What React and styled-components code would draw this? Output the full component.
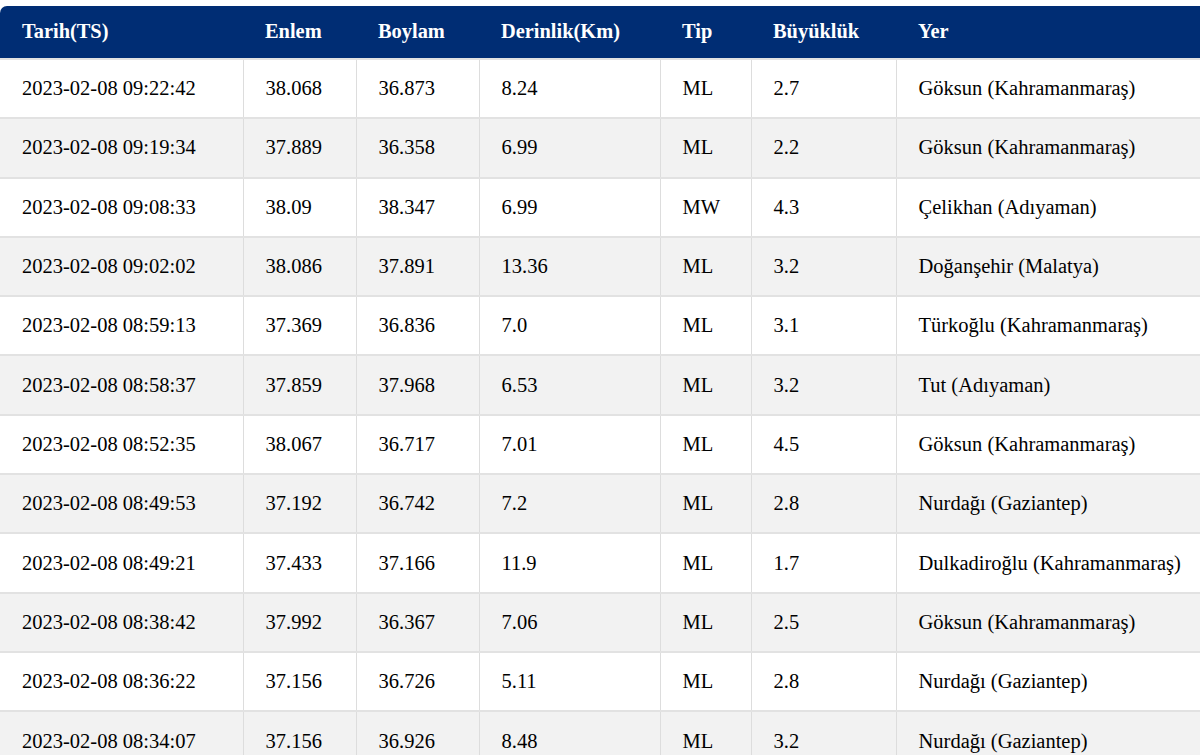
import styled, { createGlobalStyle } from "styled-components";

const GlobalStyle = createGlobalStyle`
	body {
		margin: 0;
		background: #ffffff;
		font-family: "Liberation Serif", "Times New Roman", serif;
		overflow: hidden;
	}
`;

const Wrapper = styled.div`
	padding-top: 6px;
	width: 1200px;
	overflow: hidden;
`;

const Table = styled.table`
	width: 1220px;
	border-collapse: collapse;
	color: #000;
`;

const HeadRow = styled.tr`
	background-color: #002d74;
`;

const Th = styled.th`
	height: 53px;
	padding: 0 22px 2px;
	text-align: left;
	color: #ffffff;
	font-size: 20.4px;
	font-weight: bold;
	border-bottom: 1px solid #4a5f92;
	box-sizing: border-box;
	&:first-child {
		border-top-left-radius: 7px;
	}
`;

const Row = styled.tr`
	background-color: ${(props) => (props.$alt ? "#f2f2f2" : "#ffffff")};
`;

const Td = styled.td`
	height: 59.3px;
	box-sizing: border-box;
	padding: 0 22px;
	font-size: 20.5px;
	border: 1px solid #dddddd;
	border-top: 2px solid #e2e2e2;
	&:first-child {
		border-left: none;
	}
`;

const columns = [
	{ label: "Tarih(TS)", width: 243 },
	{ label: "Enlem", width: 113 },
	{ label: "Boylam", width: 123 },
	{ label: "Derinlik(Km)", width: 181 },
	{ label: "Tip", width: 91 },
	{ label: "Büyüklük", width: 145 },
	{ label: "Yer" },
];

const quakes = [
	["2023-02-08 09:22:42", "38.068", "36.873", "8.24", "ML", "2.7", "Göksun (Kahramanmaraş)"],
	["2023-02-08 09:19:34", "37.889", "36.358", "6.99", "ML", "2.2", "Göksun (Kahramanmaraş)"],
	["2023-02-08 09:08:33", "38.09", "38.347", "6.99", "MW", "4.3", "Çelikhan (Adıyaman)"],
	["2023-02-08 09:02:02", "38.086", "37.891", "13.36", "ML", "3.2", "Doğanşehir (Malatya)"],
	["2023-02-08 08:59:13", "37.369", "36.836", "7.0", "ML", "3.1", "Türkoğlu (Kahramanmaraş)"],
	["2023-02-08 08:58:37", "37.859", "37.968", "6.53", "ML", "3.2", "Tut (Adıyaman)"],
	["2023-02-08 08:52:35", "38.067", "36.717", "7.01", "ML", "4.5", "Göksun (Kahramanmaraş)"],
	["2023-02-08 08:49:53", "37.192", "36.742", "7.2", "ML", "2.8", "Nurdağı (Gaziantep)"],
	["2023-02-08 08:49:21", "37.433", "37.166", "11.9", "ML", "1.7", "Dulkadiroğlu (Kahramanmaraş)"],
	["2023-02-08 08:38:42", "37.992", "36.367", "7.06", "ML", "2.5", "Göksun (Kahramanmaraş)"],
	["2023-02-08 08:36:22", "37.156", "36.726", "5.11", "ML", "2.8", "Nurdağı (Gaziantep)"],
	["2023-02-08 08:34:07", "37.156", "36.926", "8.48", "ML", "3.2", "Nurdağı (Gaziantep)"],
];

const App = () => {
	return (
		<Wrapper>
			<GlobalStyle />
			<Table>
				<colgroup>
					{columns.map((c) => (
						<col key={c.label} style={c.width ? { width: c.width + "px" } : undefined} />
					))}
				</colgroup>
				<thead>
					<HeadRow>
						{columns.map((c) => (
							<Th key={c.label}>{c.label}</Th>
						))}
					</HeadRow>
				</thead>
				<tbody>
					{quakes.map((q, i) => (
						<Row key={q[0]} $alt={i % 2 === 1}>
							{q.map((v, j) => (
								<Td key={j}>{v}</Td>
							))}
						</Row>
					))}
				</tbody>
			</Table>
		</Wrapper>
	);
};

export default App;
